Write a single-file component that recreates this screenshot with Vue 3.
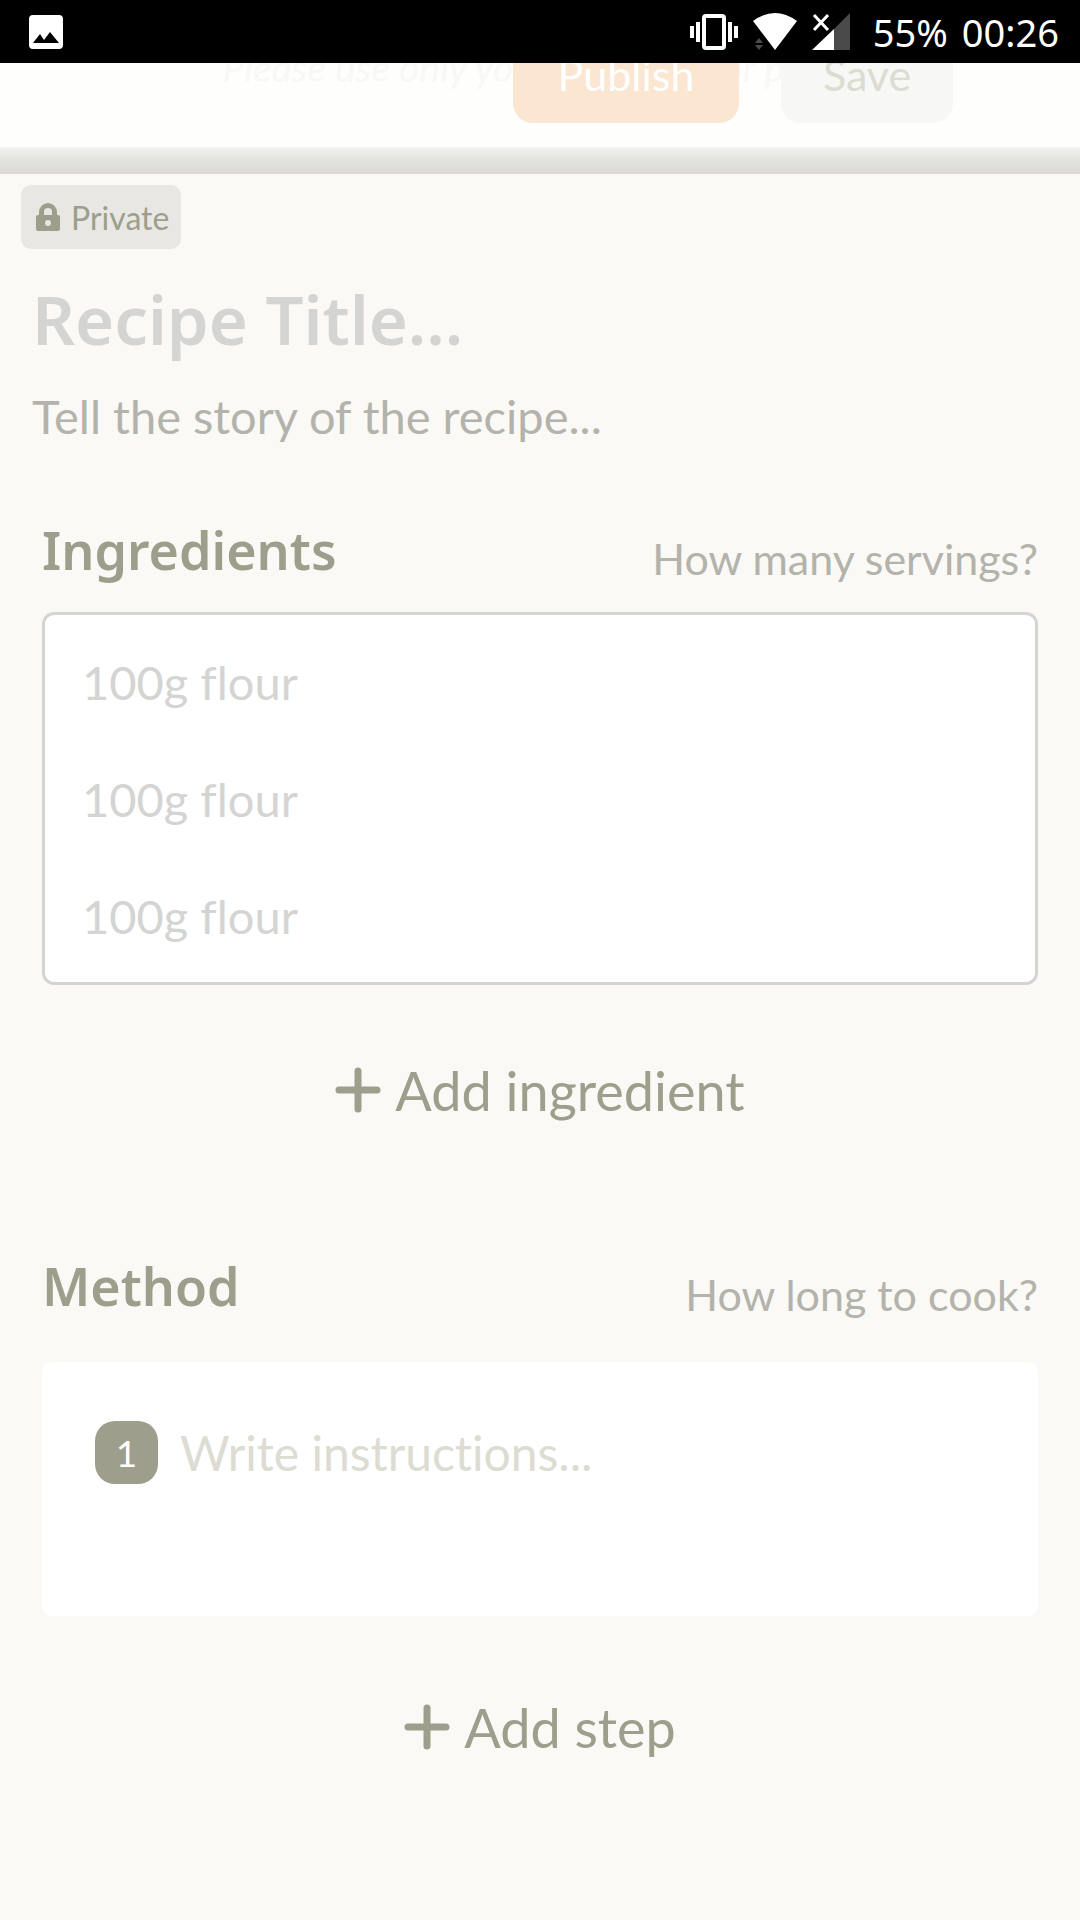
<script setup>
import { ref } from 'vue'

const title = ref('')
const story = ref('')
const servings = ref('')
const cookTime = ref('')
const ingredients = ref(['', '', ''])
const steps = ref([''])
</script>

<template>
  <div class="screen">
    <div class="status">
      <svg class="status-icon" width="34" height="34" viewBox="0 0 34 34" aria-hidden="true">
        <path fill="#fff" fill-rule="evenodd" d="M4 0h26a4 4 0 0 1 4 4v26a4 4 0 0 1-4 4H4a4 4 0 0 1-4-4V4a4 4 0 0 1 4-4zM4 28h26l-9-11-6 8-4-6z" />
      </svg>
      <div class="status-right">
        <svg width="48" height="36" viewBox="0 0 48 36" aria-hidden="true">
          <rect x="14" y="2" width="20" height="32" rx="2" fill="none" stroke="#fff" stroke-width="4" />
          <path fill="#fff" d="M0 12h4v12H0zM6 8h4v20H6zM38 8h4v20h-4zM44 12h4v12h-4z" />
        </svg>
        <svg width="46" height="38" viewBox="0 0 46 38" aria-hidden="true">
          <path fill="#fff" d="M1 8Q23-8 45 8L23 37z" />
          <path fill="#4a4a4a" d="M3 30l4-5 4 5zM3 32h8l-4 5z" />
        </svg>
        <svg width="38" height="38" viewBox="0 0 38 38" aria-hidden="true">
          <path fill="#4a4a4a" d="M38 0v37H22V16z" />
          <path fill="#fff" d="M22 16v21H0z" />
          <path fill="none" stroke="#fff" stroke-width="3" d="M2 2l14 15M16 2L2 17" />
        </svg>
        <span class="battery">55%</span>
        <span class="clock">00:26</span>
      </div>
    </div>

    <header class="toolbar">
      <p class="note">* Please use only your own work or photos</p>
      <button type="button" class="publish">Publish</button>
      <button type="button" class="save">Save</button>
    </header>
    <div class="shade"></div>

    <main class="editor">
      <button type="button" class="privacy">
        <svg width="24" height="28" viewBox="0 0 24 28" aria-hidden="true">
          <path fill="#9d9e8b" fill-rule="evenodd" d="M3 12V9a9 9 0 0 1 18 0v3h1a2 2 0 0 1 2 2v12a2 2 0 0 1-2 2H2a2 2 0 0 1-2-2V14a2 2 0 0 1 2-2zM8 12h8V9a4 4 0 0 0-8 0zM12 17a3 3 0 1 0 0 6 3 3 0 0 0 0-6z" />
        </svg>
        Private
      </button>

      <input v-model="title" class="title" type="text" aria-label="Recipe title" placeholder="Recipe Title..." />
      <input v-model="story" class="story" type="text" aria-label="Story" placeholder="Tell the story of the recipe..." />

      <section class="block">
        <div class="block-head">
          <h2>Ingredients</h2>
          <input v-model="servings" type="text" aria-label="Servings" placeholder="How many servings?" />
        </div>
        <div class="ingredients">
          <input
            v-for="(item, i) in ingredients"
            :key="i"
            v-model="ingredients[i]"
            type="text"
            :aria-label="`Ingredient ${i + 1}`"
            placeholder="100g flour"
          />
        </div>
        <button type="button" class="add" @click="ingredients.push('')">
          <svg width="46" height="46" viewBox="0 0 46 46" aria-hidden="true">
            <path fill="none" stroke="#9d9e8b" stroke-width="7" stroke-linecap="round" d="M23 4v38M4 23h38" />
          </svg>
          Add ingredient
        </button>
      </section>

      <section class="block method">
        <div class="block-head">
          <h2>Method</h2>
          <input v-model="cookTime" type="text" aria-label="Cooking time" placeholder="How long to cook?" />
        </div>
        <ol class="steps">
          <li v-for="(step, i) in steps" :key="i">
            <span class="number">{{ i + 1 }}</span>
            <textarea v-model="steps[i]" rows="2" :aria-label="`Step ${i + 1}`" placeholder="Write instructions..."></textarea>
          </li>
        </ol>
        <button type="button" class="add" @click="steps.push('')">
          <svg width="46" height="46" viewBox="0 0 46 46" aria-hidden="true">
            <path fill="none" stroke="#9d9e8b" stroke-width="7" stroke-linecap="round" d="M23 4v38M4 23h38" />
          </svg>
          Add step
        </button>
      </section>
    </main>
  </div>
</template>

<style>
body {
  background: #faf9f5;
}
</style>

<style scoped>
.screen {
  min-height: 100vh;
  background: #faf9f5;
  color: #9d9e8b;
  font-family: Lato, "Noto Sans", sans-serif;
  font-variant-ligatures: none;
}
.screen * {
  box-sizing: border-box;
}
button,
input,
textarea {
  margin: 0;
  padding: 0;
  border: 0;
  background: none;
  font: inherit;
  color: inherit;
  outline: none;
}
input,
textarea {
  display: block;
  width: 100%;
  min-width: 0;
  font-variant-ligatures: none;
}
::placeholder {
  color: #b3b3ac;
  opacity: 1;
}
.status {
  display: flex;
  justify-content: space-between;
  align-items: center;
  height: 63px;
  padding: 0 21px 0 29px;
  background: #000;
  color: #fff;
  font-family: "Noto Sans", sans-serif;
  font-size: 38px;
}
.status-right {
  display: flex;
  align-items: center;
  gap: 14px;
}
.battery {
  margin-left: 9px;
}
.toolbar {
  position: relative;
  display: flex;
  justify-content: flex-end;
  align-items: flex-end;
  gap: 42px;
  height: 84px;
  padding: 0 127px 24px 0;
  overflow: hidden;
  background: #fefefc;
}
.toolbar button {
  position: relative;
  flex: none;
  height: 96px;
  border-radius: 20px;
  font-size: 43px;
  line-height: 96px;
}
.toolbar .publish {
  width: 226px;
  background: #fbe6d1;
  color: #fff;
}
.toolbar .save {
  width: 172px;
  background: #f7f8f5;
  color: #dcdcd2;
}
.note {
  position: absolute;
  left: 198px;
  bottom: 58px;
  margin: 0;
  color: #f8f8f7;
  font-size: 39px;
  font-style: italic;
  line-height: 44px;
  white-space: nowrap;
}
.shade {
  height: 27px;
  background: linear-gradient(#f3f3f1, #e2e2df 50%, #d9d8d5);
}
.editor {
  padding: 11px 21px 0;
}
.privacy {
  display: flex;
  align-items: center;
  gap: 11px;
  height: 64px;
  padding: 0 12px 0 15px;
  border-radius: 10px;
  background: #e8e7e3;
  font-size: 32px;
}
.title {
  height: 88px;
  margin-top: 26px;
  padding: 0 11px;
  font-family: "Noto Sans", sans-serif;
  font-size: 67px;
  font-weight: 600;
}
.title::placeholder {
  color: #d4d4d3;
}
.story {
  height: 64px;
  margin-top: 21px;
  padding: 0 11px;
  font-size: 47px;
}
.block {
  padding: 0 21px;
}
.block-head {
  display: flex;
  align-items: flex-end;
  gap: 24px;
  height: 70px;
}
.block-head h2 {
  align-self: flex-start;
  margin: 0;
  font-family: "Noto Sans", sans-serif;
  font-size: 52px;
  font-weight: 600;
  line-height: 64px;
}
.block-head input {
  flex: 1;
  height: 60px;
  font-size: 43px;
  text-align: right;
}
.story + .block {
  margin-top: 70px;
}
.ingredients {
  margin-top: 24px;
  padding: 8px 37px;
  border: 3px solid #d4d4d3;
  border-radius: 12px;
  background: #fff;
}
.ingredients input {
  height: 117px;
  font-size: 47px;
}
.ingredients input::placeholder {
  color: #d4d4d3;
}
.add {
  display: flex;
  align-items: center;
  gap: 14px;
  height: 80px;
  margin: 65px auto 0;
  font-size: 54px;
}
.method {
  margin-top: 124px;
}
.method .add {
  margin-top: 71px;
}
.steps {
  margin: 38px 0 0;
  padding: 0;
  border-radius: 10px;
  background: #fff;
  list-style: none;
}
.steps li {
  display: flex;
  align-items: flex-start;
  gap: 22px;
  padding: 59px 53px;
}
.number {
  flex: none;
  width: 63px;
  height: 63px;
  border-radius: 20px;
  background: #9d9e8b;
  color: #fff;
  font-size: 37px;
  line-height: 63px;
  text-align: center;
}
.steps textarea {
  height: 136px;
  font-size: 48px;
  line-height: 64px;
  resize: none;
}
.steps textarea::placeholder {
  color: #dcdcd2;
}
</style>
